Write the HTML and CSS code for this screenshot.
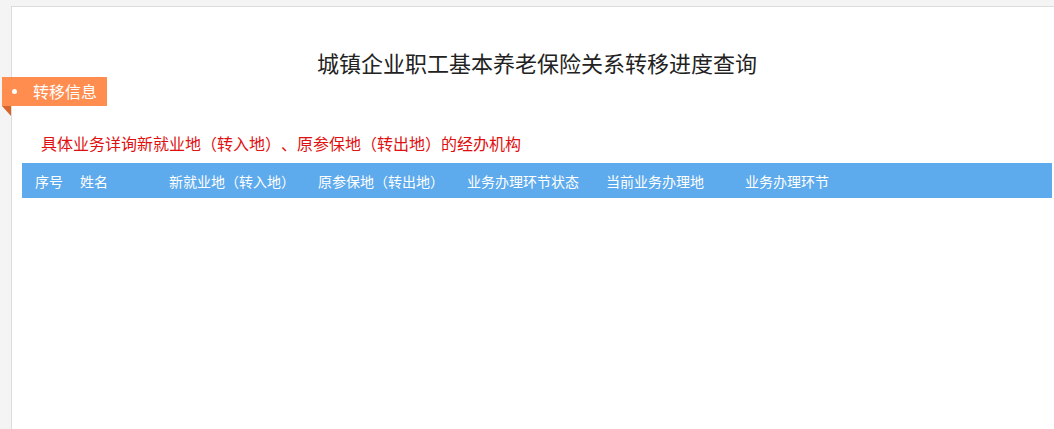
FILE: index.html
```html
<!DOCTYPE html>
<html lang="zh-CN">
<head>
    <meta charset="UTF-8">
    <meta name="viewport" content="width=device-width, initial-scale=1.0">
    <title>城镇企业职工基本养老保险关系转移进度查询</title>
    <link rel="stylesheet" href="styles.css">
</head>
<body>
    <div class="panel">
        <h1 class="title">城镇企业职工基本养老保险关系转移进度查询</h1>
        <div class="tag"><span class="dot"></span>转移信息</div>
        <p class="notice">具体业务详询新就业地（转入地）、原参保地（转出地）的经办机构</p>
        <table class="progress-table">
            <colgroup>
                <col class="c1">
                <col class="c2">
                <col class="c3">
                <col class="c4">
                <col class="c5">
                <col class="c6">
                <col>
            </colgroup>
            <thead>
                <tr>
                    <th>序号</th>
                    <th>姓名</th>
                    <th>新就业地（转入地）</th>
                    <th>原参保地（转出地）</th>
                    <th>业务办理环节状态</th>
                    <th>当前业务办理地</th>
                    <th>业务办理环节</th>
                </tr>
            </thead>
            <tbody></tbody>
        </table>
    </div>
</body>
</html>
```

FILE: styles.css
```css
html, body {
    height: 100%;
}

body {
    margin: 0;
    background-color: #f4f4f4;
    font-family: "Noto Sans CJK SC", "Noto Sans", sans-serif;
    text-spacing-trim: space-all;
    overflow: hidden;
}

.panel {
    box-sizing: border-box;
    height: calc(100% - 6px);
    margin: 6px 0 0 11px;
    padding-top: 40px;
    background-color: #fff;
    border-top: 1px solid #dcdcdc;
    border-left: 1px solid #dcdcdc;
}

.title {
    margin: 0;
    height: 30px;
    padding-left: 8px;
    line-height: 30px;
    font-size: 22px;
    font-weight: normal;
    color: #222;
    text-align: center;
}

.tag {
    position: relative;
    width: 105px;
    box-sizing: border-box;
    height: 29px;
    line-height: 29px;
    margin-left: -10px;
    padding-left: 31px;
    background-color: #ff8d4f;
    color: #fff;
    font-size: 16px;
}

.tag::after {
    content: "";
    position: absolute;
    left: 0;
    top: 29px;
    border-top: 10px solid #d8662c;
    border-left: 9px solid transparent;
}

.dot {
    position: absolute;
    left: 10px;
    top: 12px;
    width: 5px;
    height: 5px;
    border-radius: 50%;
    background-color: #fff;
}

.notice {
    margin: 27px 0 0 29px;
    height: 20px;
    line-height: 20px;
    font-size: 16px;
    color: #e01010;
}

.progress-table {
    width: calc(100% - 12px);
    margin: 10px 0 0 10px;
    border-collapse: collapse;
    table-layout: fixed;
}

.progress-table th {
    height: 35px;
    padding: 0 0 0 13px;
    background-color: #5daaec;
    color: #fff;
    font-size: 14px;
    font-weight: normal;
    text-align: left;
    white-space: nowrap;
}

.c1 { width: 45px; }
.c2 { width: 89px; }
.c3 { width: 149px; }
.c4 { width: 149px; }
.c5 { width: 139px; }
.c6 { width: 139px; }
```
